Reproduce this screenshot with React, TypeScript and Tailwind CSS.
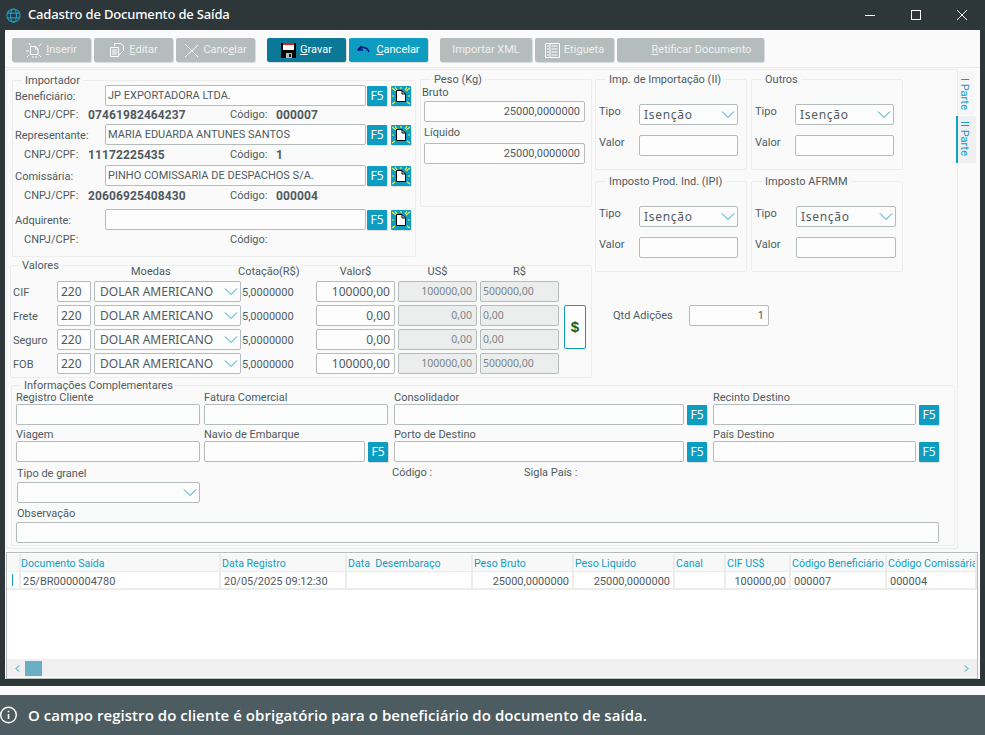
import React from "react";

const Chevron = () => (
  <svg width="14" height="7" viewBox="0 0 14 7" fill="none" className="shrink-0">
    <path d="M1 .5 7 6.500 13 .5" stroke="#1a9fc4" strokeWidth="1" />
  </svg>
);

const Input = ({ w, value, right, muted, mt, ml, text }: { w: string; value?: string; right?: boolean; muted?: boolean; mt?: string; ml?: string; text?: string }) => (
  <div
    className={`${w} ${mt ?? ""} ${ml ?? ""} ${text ?? "pt-[2px]"} h-[21px] shrink-0 rounded-[2px] border border-[#b5bcbc] flex items-center px-[2px] overflow-hidden whitespace-nowrap text-[#4f5a60] ${right ? "justify-end pr-[4px]" : ""} ${muted ? "bg-[#eceeee] text-[#7a8488]" : "bg-[#fdfdfd]"}`}
  >
    {value}
  </div>
);

const Select = ({ w, value, mono }: { w: string; value?: string; mono?: boolean }) => (
  <div className={`${w} h-[21px] shrink-0 rounded-[2px] border border-[#b5bcbc] bg-[#fdfdfd] flex items-center justify-between pr-[2px] text-[#4f5a60] whitespace-nowrap font-['Noto_Sans',sans-serif] text-[12px] ${mono ? "pl-[5px]" : "pl-[4px] tracking-[0.7px]"}`}>
    <span>{value}</span>
    <Chevron />
  </div>
);

const F5 = ({ ml }: { ml?: string }) => (
  <div className={`${ml ?? "ml-[1px]"} w-[20px] h-[20px] mt-[1px] shrink-0 rounded-[1px] bg-[#0e9cc0] text-white text-[12px] font-['Noto_Sans',sans-serif] flex items-center justify-center shadow-[1px_1px_0_#d8dcdc]`}>
    F5
  </div>
);

const NewDoc = () => (
  <div className="ml-[4px] w-[20px] h-[20px] mt-[1px] shrink-0 rounded-[1px] bg-[#0e9cc0] flex items-center justify-center shadow-[1px_1px_0_#d8dcdc]">
    <svg width="20" height="20" viewBox="0 0 20 20">
      <path d="M1 2 5 5M19 2 15 5M1 18 4 16M19 18 16 16M1 10H3M17 10H19M10 1V3M4 1 6 4M16 1 14 4" stroke="#f6f13a" strokeWidth="1.200" />
      <path d="M5.500 4.500H11L14.500 8V15.500H5.500Z" fill="#fff" stroke="#000" strokeWidth="1" />
      <path d="M11 4.500V8H14.500" fill="none" stroke="#000" strokeWidth="1" />
    </svg>
  </div>
);

const Box = ({ title, left, className, children }: { title: string; left: string; className: string; children?: React.ReactNode }) => (
  <div className={`relative shrink-0 rounded-[2px] border border-[#ededed] ${className}`}>
    <span className={`absolute -top-[5px] ${left} bg-[#fafafa] px-[3px] leading-[10px] text-[#4f5a60] whitespace-nowrap`}>{title}</span>
    {children}
  </div>
);

const ToolBtn = ({ w, ml, dark, teal, icon, gap, children }: { w: string; ml?: string; dark?: boolean; teal?: boolean; icon?: React.ReactNode; gap?: string; children: React.ReactNode }) => (
  <div
    className={`${w} ${ml ?? ""} ${gap ?? "gap-[4px]"} h-[24px] shrink-0 rounded-[2px] flex items-center justify-center text-[11px] shadow-[1px_1px_0_#d9dddd] ${dark ? "bg-[#0a7896] text-white" : teal ? "bg-[#0e9cc0] text-white" : "bg-[#b4bcbc] text-[#eef0f0]"}`}
  >
    {icon}
    <span className="pt-[1px]">{children}</span>
  </div>
);

const Party = ({ label, value, cnpj, code, mtTop, subH }: { label: string; value?: string; cnpj?: string; code?: string; mtTop: string; subH: string }) => (
  <>
    <div className={`flex ${mtTop}`}>
      <div className="w-[92px] h-[21px] pl-[2px] leading-[23px] shrink-0">{label}</div>
      <Input w="w-[261px]" value={value} />
      <F5 />
      <NewDoc />
    </div>
    <div className={`flex items-center ${subH} pl-[11px]`}>
      <span className="w-[64px]">CNPJ/CPF:</span>
      <b className="w-[142px] font-bold tracking-[0.1px] text-[12px]">{cnpj}</b>
      <span className="w-[46px]">Código:</span>
      <b className="font-bold tracking-[0.1px] text-[12px]">{code}</b>
    </div>
  </>
);

const TaxBox = ({ title, left, value, selW, labW, className }: { title: string; left: string; value: string; selW: string; labW: string; className?: string }) => (
  <Box title={title} left={left} className={`w-[152px] h-[91px] pt-[24px] pl-[3px] ${className ?? ""}`}>
    <div className="flex">
      <span className={`${labW} h-[14px] leading-[16px]`}>Tipo</span>
      <Select w={selW} value={value} />
    </div>
    <div className="flex mt-[10px]">
      <span className={`${labW} h-[14px] leading-[16px]`}>Valor</span>
      <Input w={selW} />
    </div>
  </Box>
);

const noto12 = "text-[12px] font-['Noto_Sans',sans-serif]";
const noto105 = "text-[10.5px] font-['Noto_Sans',sans-serif]";

const ValRow = ({ label, a, b, c }: { label: string; a: string; b: string; c: string }) => (
  <div className="flex h-[21px] items-center">
    <span className="w-[46px] pl-[2px] pt-[4px] shrink-0">{label}</span>
    <div className="w-[34px] h-[21px] shrink-0 rounded-[2px] border border-[#b5bcbc] bg-[#fdfdfd] flex items-center pl-[3px] text-[12px] font-['Noto_Sans',sans-serif]">220</div>
    <div className="ml-[3px]"><Select w="w-[147px]" value="DOLAR AMERICANO" mono /></div>
    <span className="ml-[1px] w-[74px] shrink-0 pt-[4px]">5,0000000</span>
    <Input w="w-[79px]" value={a} right text={noto12} />
    <Input w="w-[79px]" ml="ml-[3px]" value={b} right muted text={noto105} />
    <Input w="w-[79px]" ml="ml-[3px]" value={c} muted text={noto105} />
  </div>
);

const Field = ({ label, w, ml, f5 }: { label: string; w: string; ml?: string; f5?: boolean }) => (
  <div className={`${ml ?? ""} shrink-0`}>
    <div className="h-[14px] leading-[16px]">{label}</div>
    <div className="flex">
      <Input w={w} />
      {f5 && <F5 ml="ml-[3px]" />}
    </div>
  </div>
);

const Th = ({ w, pl, children }: { w: string; pl?: string; children?: React.ReactNode }) => (
  <div className={`${w} ${pl ?? "pl-[1px]"} h-[17px] shrink-0 border-r-2 border-[#ececec] whitespace-nowrap overflow-hidden text-[#0f9dc3] text-[10.6px] leading-[19px]`}>{children}</div>
);
const Td = ({ w, right, pl, children }: { w: string; right?: boolean; pl?: string; children?: React.ReactNode }) => (
  <div className={`${w} ${pl ?? "pl-[3px]"} pr-[3px] shrink-0 border-r-2 border-[#ececec] whitespace-nowrap overflow-hidden leading-[19px] ${right ? "text-right" : ""}`}>{children}</div>
);

export default function App() {
  return (
    <div className="w-[985px] h-[735px] overflow-hidden bg-[#fafafa] text-[11px] text-[#4f5a60] font-['Roboto',sans-serif]">
      <div className="h-[686px] bg-[#2d3739] flex flex-col">
        {/* title bar */}
        <div className="h-[30px] shrink-0 flex items-center text-white">
          <svg width="15" height="15" viewBox="0 0 16 16" fill="none" stroke="#1a9fc4" strokeWidth="1.200" className="ml-[6px]">
            <circle cx="8" cy="8" r="7" />
            <ellipse cx="8" cy="8" rx="3.200" ry="7" />
            <path d="M1.500 5.500h13M1.500 10.500h13" />
          </svg>
          <span className="ml-[7px] text-[13px] font-medium tracking-[-0.17px] font-['Noto_Sans',sans-serif]">Cadastro de Documento de Saída</span>
          <div className="ml-auto flex items-center pr-[18px]">
            <div className="w-[10px] h-[1px] bg-white" />
            <div className="ml-[36px] w-[10px] h-[10px] border border-white" />
            <svg width="10" height="10" viewBox="0 0 10 10" className="ml-[36px]" stroke="#fff" strokeWidth="1"><path d="M0 0 10 10M10 0 0 10" /></svg>
          </div>
        </div>

        {/* window body */}
        <div className="mx-[5px] h-[649px] bg-[#fafafa] flex flex-col">
          {/* toolbar */}
          <div className="h-[38px] shrink-0 border-b border-[#ebebeb] pt-[8px] pl-[7px] flex">
            <ToolBtn w="w-[79px]" icon={
              <svg width="16" height="16" viewBox="0 0 16 16" fill="none" stroke="#fff" strokeWidth="1"><path d="M4.500 4.500H9.500L12 7V12.500H4.500Z" /><path d="M9.500 4.500V7H12" /><path d="M1 15l2-2M13 13l2 2M0 9h3M3 1l1.500 2.500M13 4l2.500-2.500M7 14v2M10 14v2" /></svg>
            }><u>I</u>nserir</ToolBtn>
            <ToolBtn w="w-[79px]" ml="ml-[3px]" icon={
              <svg width="16" height="16" viewBox="0 0 16 16" fill="none" stroke="#fff" strokeWidth="1"><path d="M5.500 4V1.500H12L14.500 4V9" /><path d="M1.500 5.500H9.500V14.500H1.500Z" /><path d="M3 8h5M3 10h5M3 12h5M10 13l4-4" /></svg>
            }><u>E</u>ditar</ToolBtn>
            <ToolBtn w="w-[79px]" ml="ml-[3px]" icon={
              <svg width="15" height="15" viewBox="0 0 15 15" fill="none" stroke="#fff" strokeWidth="1"><path d="M1 1 14 14M14 2 1 14" /></svg>
            }>Canc<u>e</u>lar</ToolBtn>
            <ToolBtn w="w-[79px]" ml="ml-[12px]" dark icon={
              <svg width="15" height="15" viewBox="0 0 15 15"><path d="M0 0H15V15H0Z" fill="#000" /><path d="M2 0H13V2H2Z" fill="#e21b1b" /><path d="M2 2H13V7H2Z" fill="#fff" /><path d="M5 10H11V15H5Z" fill="#b8bcbc" /><path d="M8 11H10V14H8Z" fill="#111" /></svg>
            }><u>G</u>ravar</ToolBtn>
            <ToolBtn w="w-[79px]" ml="ml-[3px]" teal gap="gap-[6px]" icon={
              <svg width="13" height="10" viewBox="0 0 13 10" fill="none" stroke="#06107e" strokeWidth="1.400"><path d="M4.500 1 1 5h5" /><path d="M1.500 4.500C4 1.500 10 1.500 12 7" /></svg>
            }><u>C</u>ancelar</ToolBtn>
            <ToolBtn w="w-[92px]" ml="ml-[12px]">Importar XML</ToolBtn>
            <ToolBtn w="w-[79px]" ml="ml-[3px]" icon={
              <svg width="15" height="15" viewBox="0 0 15 15" fill="none" stroke="#fff" strokeWidth="1"><path d="M.5.500h14v14H.5Z" /><path d="M5 .5v14M2 3h2M2 6h2M2 9h2M2 12h2M6.500 3h6M6.500 6h6M6.500 9h6M6.500 12h6" /></svg>
            }>Eti<u>q</u>ueta</ToolBtn>
            <ToolBtn w="w-[147px]" ml="ml-[3px]"><span className="ml-[22px]"><u>R</u>etificar Documento</span></ToolBtn>
          </div>

          {/* main row */}
          <div className="flex shrink-0 mt-[1px]">
            <div className="ml-[1px] w-[952px] h-[480px] shrink-0 border border-[#ececec] rounded-[2px] pl-[3px] pt-[9px]">
              <div className="flex">
                {/* left column */}
                <div className="w-[582px] shrink-0">
                  <div className="flex items-start h-[186px]">
                    <Box title="Importador" left="left-[9px]" className="ml-[2px] mt-[1px] w-[404px] h-[177px]">
                      <Party label="Beneficiário:" value="JP EXPORTADORA LTDA." cnpj="07461982464237" code="000007" mtTop="mt-[4px]" subH="h-[18px]" />
                      <Party label="Representante:" value="MARIA EDUARDA ANTUNES SANTOS" cnpj="11172225435" code="1" mtTop="" subH="h-[20px]" />
                      <Party label="Comissária:" value="PINHO COMISSARIA DE DESPACHOS S/A." cnpj="20606925408430" code="000004" mtTop="" subH="h-[20px]" />
                      <Party label="Adquirente:" mtTop="mt-[3px]" subH="h-[21px]" />
                    </Box>
                    <Box title="Peso (Kg)" left="left-[10px]" className="ml-[4px] w-[172px] h-[128px] pt-[4px]">
                      <div className="pl-[1px] h-[16px] leading-[18px]">Bruto</div>
                      <Input w="w-[161px]" mt="mt-[1px]" ml="ml-[3px]" value="25000,0000000" right />
                      <div className="pl-[3px] mt-[2px] h-[16px] leading-[18px]">Líquido</div>
                      <Input w="w-[161px]" mt="mt-[3px]" ml="ml-[3px]" value="25000,0000000" right />
                    </Box>
                  </div>
                  <Box title="Valores" left="left-[8px]" className="w-[582px] h-[113px]">
                    <div className="flex h-[15px] items-start leading-[12px]">
                      <span className="ml-[120px] w-[107px]">Moedas</span>
                      <span className="w-[78px]">Cotação(R$)</span>
                      <span className="w-[79px] text-center">Valor$</span>
                      <span className="ml-[3px] w-[79px] text-center">US$</span>
                      <span className="ml-[3px] w-[79px] text-center">R$</span>
                    </div>
                    <div className="flex items-start">
                      <div className="flex flex-col gap-[3px]">
                        <ValRow label="CIF" a="100000,00" b="100000,00" c="500000,00" />
                        <ValRow label="Frete" a="0,00" b="0,00" c="0,00" />
                        <ValRow label="Seguro" a="0,00" b="0,00" c="0,00" />
                        <ValRow label="FOB" a="100000,00" b="100000,00" c="500000,00" />
                      </div>
                      <div className="ml-[5px] mt-[24px] w-[22px] h-[44px] rounded-[2px] border border-[#0e9cc0] bg-[#fdfdfd] flex items-center justify-center text-[15px] font-bold text-[#0a6428] font-['Liberation_Sans',sans-serif]">$</div>
                    </div>
                  </Box>
                </div>
                {/* right column */}
                <div className="ml-[3px] w-[308px] shrink-0">
                  <div className="flex gap-[4px]">
                    <TaxBox title="Imp. de Importação (II)" left="left-[10px]" value="Isenção" selW="w-[99px]" labW="w-[40px]" />
                    <TaxBox title="Outros" left="left-[10px]" value="Isenção" selW="w-[99px]" labW="w-[40px]" />
                  </div>
                  <div className="flex gap-[4px] mt-[11px]">
                    <TaxBox title="Imposto Prod. Ind. (IPI)" left="left-[10px]" value="Isenção" selW="w-[99px]" labW="w-[40px]" />
                    <TaxBox title="Imposto AFRMM" left="left-[10px]" value="Isenção" selW="w-[100px]" labW="w-[41px]" />
                  </div>
                  <div className="flex items-center mt-[33px] ml-[18px]">
                    <span className="w-[76px] pt-[2px]">Qtd Adições</span>
                    <Input w="w-[80px]" value="1" right />
                  </div>
                </div>
              </div>

              {/* informações complementares */}
              <Box title="Informações Complementares" left="left-[9px]" className="ml-[1px] mt-[7px] w-[944px] h-[161px] pt-[4px] pl-[4px]">
                <div className="flex">
                  <Field label="Registro Cliente" w="w-[184px]" />
                  <Field label="Fatura Comercial" w="w-[184px]" ml="ml-[4px]" />
                  <Field label="Consolidador" w="w-[290px]" ml="ml-[6px]" f5 />
                  <Field label="Recinto Destino" w="w-[203px]" ml="ml-[6px]" f5 />
                </div>
                <div className="flex mt-[2px]">
                  <Field label="Viagem" w="w-[184px]" />
                  <Field label="Navio de Embarque" w="w-[161px]" ml="ml-[4px]" f5 />
                  <div className="ml-[6px]"><Field label="Porto de Destino" w="w-[290px]" f5 /></div>
                  <Field label="País Destino" w="w-[203px]" ml="ml-[6px]" f5 />
                </div>
                <div className="flex mt-[4px] h-[37px]">
                  <div className="ml-[1px] w-[183px] shrink-0">
                    <div className="h-[16px] leading-[16px]">Tipo de granel</div>
                    <Select w="w-[183px]" />
                  </div>
                  <span className="ml-[192px] w-[132px] h-[12px] leading-[14px]">Código :</span>
                  <span className="h-[12px] leading-[14px]">Sigla País :</span>
                </div>
                <div className="mt-[3px] ml-[1px] h-[16px] leading-[16px]">Observação</div>
                <Input w="w-[923px]" />
              </Box>
            </div>

            {/* side tabs */}
            <div className="pt-[2px] flex flex-col shrink-0">
              <div className="w-[16px] h-[44px] bg-[#f6f6f6] flex items-end justify-start pt-[7px] [writing-mode:vertical-rl] text-[#0f9dc3] text-[11px] leading-[12px]">I Parte</div>
              <div className="mt-[1px] -ml-[2px] w-[20px] h-[47px] bg-[#f0f0f0] border-l-2 border-[#12a3c2] flex items-end justify-start pt-[5px] [writing-mode:vertical-rl] text-[#0f9dc3] text-[11px] leading-[12px]"><span className="mr-[6px]">II Parte</span></div>
            </div>
          </div>

          {/* grid */}
          <div className="ml-[1px] mt-[3px] w-[972px] h-[127px] shrink-0 border border-[#b5bcbc] bg-white flex flex-col">
            <div className="flex h-[18px] mt-[1px] pl-[1px] bg-[#f8f8f8] border-b border-[#ececec] shrink-0">
              <Th w="w-[13px]" />
              <Th w="w-[200px]" pl="pl-0">Documento Saída</Th>
              <Th w="w-[126px]">Data Registro</Th>
              <Th w="w-[126px]">Data&nbsp; Desembaraço</Th>
              <Th w="w-[101px]">Peso Bruto</Th>
              <Th w="w-[101px]">Peso Liquido</Th>
              <Th w="w-[51px]">Canal</Th>
              <Th w="w-[65px]">CIF US$</Th>
              <Th w="w-[96px]">Código Beneficiário</Th>
              <Th w="w-[90px]">Código Comissária</Th>
            </div>
            <div className="flex h-[18px] pl-[1px] border-b-2 border-[#ececec] shrink-0">
              <div className="w-[13px] shrink-0 border-r-2 border-[#ececec] pl-[4px] pt-[2px]"><div className="w-[1px] h-[12px] bg-[#0f9dc3]" /></div>
              <Td w="w-[200px]" pl="pl-[2px]">25/BR0000004780</Td>
              <Td w="w-[126px]">20/05/2025 09:12:30</Td>
              <Td w="w-[126px]" />
              <Td w="w-[101px]" right>25000,0000000</Td>
              <Td w="w-[101px]" right>25000,0000000</Td>
              <Td w="w-[51px]" />
              <Td w="w-[65px]" right>100000,00</Td>
              <Td w="w-[96px]">000007</Td>
              <Td w="w-[90px]">000004</Td>
            </div>
            <div className="flex-1" />
            <div className="h-[18px] mb-[1px] bg-[#f0f0f0] flex items-center shrink-0">
              <svg width="6" height="7" viewBox="0 0 6 7" fill="none" stroke="#0f9dc3" className="ml-[8px]"><path d="M4 .5 1 3.500 4 6.500" /></svg>
              <div className="ml-[4px] w-[17px] h-[15px] bg-[#68aec4]" />
              <svg width="6" height="7" viewBox="0 0 6 7" fill="none" stroke="#0f9dc3" className="ml-auto mr-[8px]"><path d="M2 .5 5 3.500 2 6.500" /></svg>
            </div>
          </div>
        </div>
      </div>

      {/* toast */}
      <div className="mt-[9px] h-[40px] bg-[#4c5c61] flex items-center text-white">
        <svg width="18" height="18" viewBox="0 0 18 18" fill="none" stroke="#fff" strokeWidth="1.400">
          <circle cx="8.500" cy="9" r="7.800" />
          <path d="M8.500 8v5" strokeWidth="1.600" />
          <path d="M8.500 4.700v1.600" strokeWidth="1.600" />
        </svg>
        <span className="ml-[10px] text-[15px] tracking-[0.05px] font-semibold font-['Open_Sans',sans-serif]">O campo registro do cliente é obrigatório para o beneficiário do documento de saída.</span>
      </div>
    </div>
  );
}
